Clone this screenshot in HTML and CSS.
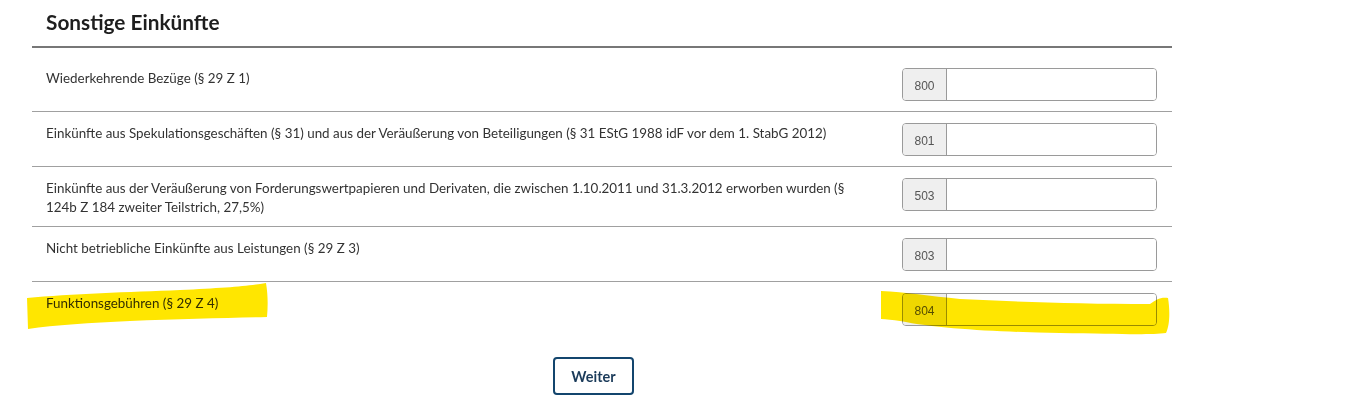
FILE: index.html
```html
<!DOCTYPE html>
<html lang="de">
<head>
<meta charset="utf-8">
<title>Sonstige Einkünfte</title>
<link rel="stylesheet" href="styles.css">
</head>
<body>
<div class="page">
  <section class="panel">
    <h2 class="title">Sonstige Einkünfte</h2>
    <div class="row first">
      <div class="label">Wiederkehrende Bezüge (§ 29 Z 1)</div>
      <div class="field"><span class="code">800</span><input class="value" type="text"></div>
    </div>
    <div class="row">
      <div class="label">Einkünfte aus Spekulationsgeschäften (§ 31) und aus der Veräußerung von Beteiligungen (§ 31 EStG 1988 idF vor dem 1. StabG 2012)</div>
      <div class="field"><span class="code">801</span><input class="value" type="text"></div>
    </div>
    <div class="row">
      <div class="label">Einkünfte aus der Veräußerung von Forderungswertpapieren und Derivaten, die zwischen 1.10.2011 und 31.3.2012 erworben wurden (§ 124b Z 184 zweiter Teilstrich, 27,5%)</div>
      <div class="field"><span class="code">503</span><input class="value" type="text"></div>
    </div>
    <div class="row">
      <div class="label">Nicht betriebliche Einkünfte aus Leistungen (§ 29 Z 3)</div>
      <div class="field"><span class="code">803</span><input class="value" type="text"></div>
    </div>
    <div class="row last">
      <div class="label">Funktionsgebühren (§ 29 Z 4)</div>
      <div class="field"><span class="code">804</span><input class="value" type="text"></div>
    </div>
    <div class="actions">
      <button class="btn" type="button">Weiter</button>
    </div>
  </section>
  <svg class="marker" width="1355" height="407" viewBox="0 0 1355 407" aria-hidden="true">
    <path d="M27,298 C70,294 130,292 180,290 C225,288 248,286 266,283 C268,295 268,306 267,317 C230,318 180,319 130,321 C90,323 55,325 28,329 Z"/>
    <path d="M881,291 C905,292 930,296 960,299 C1020,302 1080,304 1150,304 C1156,300 1160,297 1168,298 C1170,310 1170,325 1166,333 C1150,335 1120,334 1060,333 C1000,332 940,329 900,321 C893,320 886,319 881,319 Z"/>
  </svg>
</div>
</body>
</html>
```
FILE: styles.css
```css
* { box-sizing: border-box; }
html, body { margin: 0; padding: 0; background: #fff; }
body {
  font-family: "Lato", "Liberation Sans", sans-serif;
  color: #333;
}
.page {
  position: relative;
  width: 1355px;
  height: 407px;
  overflow: hidden;
}
.panel {
  margin-left: 32px;
  width: 1140px;
}
.title {
  margin: 0;
  padding: 8px 0 10px 14px;
  font-size: 20.8px;
  line-height: 28px;
  font-weight: 700;
  color: #1e1e1e;
  border-bottom: 2px solid #777;
}
.row {
  display: grid;
  grid-template-columns: 1fr 255px;
  column-gap: 40px;
  align-items: start;
  padding: 11px 15px 10px 14px;
  border-bottom: 1px solid #a0a0a0;
}
.row.first { padding-top: 20px; }
.row.last { border-bottom: none; }
.label {
  font-size: 13.4px;
  line-height: 19px;
  max-width: 805px;
  margin-top: 1px;
  margin-bottom: -1px;
}
.field {
  display: flex;
  height: 33px;
  border: 1px solid #9a9a9a;
  border-radius: 4px;
  overflow: hidden;
}
.code {
  width: 44px;
  flex: none;
  display: flex;
  align-items: center;
  justify-content: center;
  background: #efefef;
  border-right: 1px solid #9a9a9a;
  font-family: "Liberation Sans", Arial, sans-serif;
  font-size: 12px;
  color: #555;
  padding-top: 2px;
}
.value {
  flex: 1;
  border: none;
  margin: 0;
  padding: 0 8px;
  background: #fff;
  outline: none;
}
.actions {
  padding: 21px 0 0 521px;
}
.btn {
  width: 81px;
  height: 38px;
  border: 2px solid #13456d;
  border-radius: 4px;
  background: #fff;
  color: #1b3b5a;
  font-family: "Lato", "Liberation Sans", sans-serif;
  font-size: 14.5px;
  font-weight: 700;
  cursor: pointer;
}
.marker {
  position: absolute;
  left: 0;
  top: 0;
  pointer-events: none;
  mix-blend-mode: multiply;
}
.marker path { fill: #ffe600; }
```
